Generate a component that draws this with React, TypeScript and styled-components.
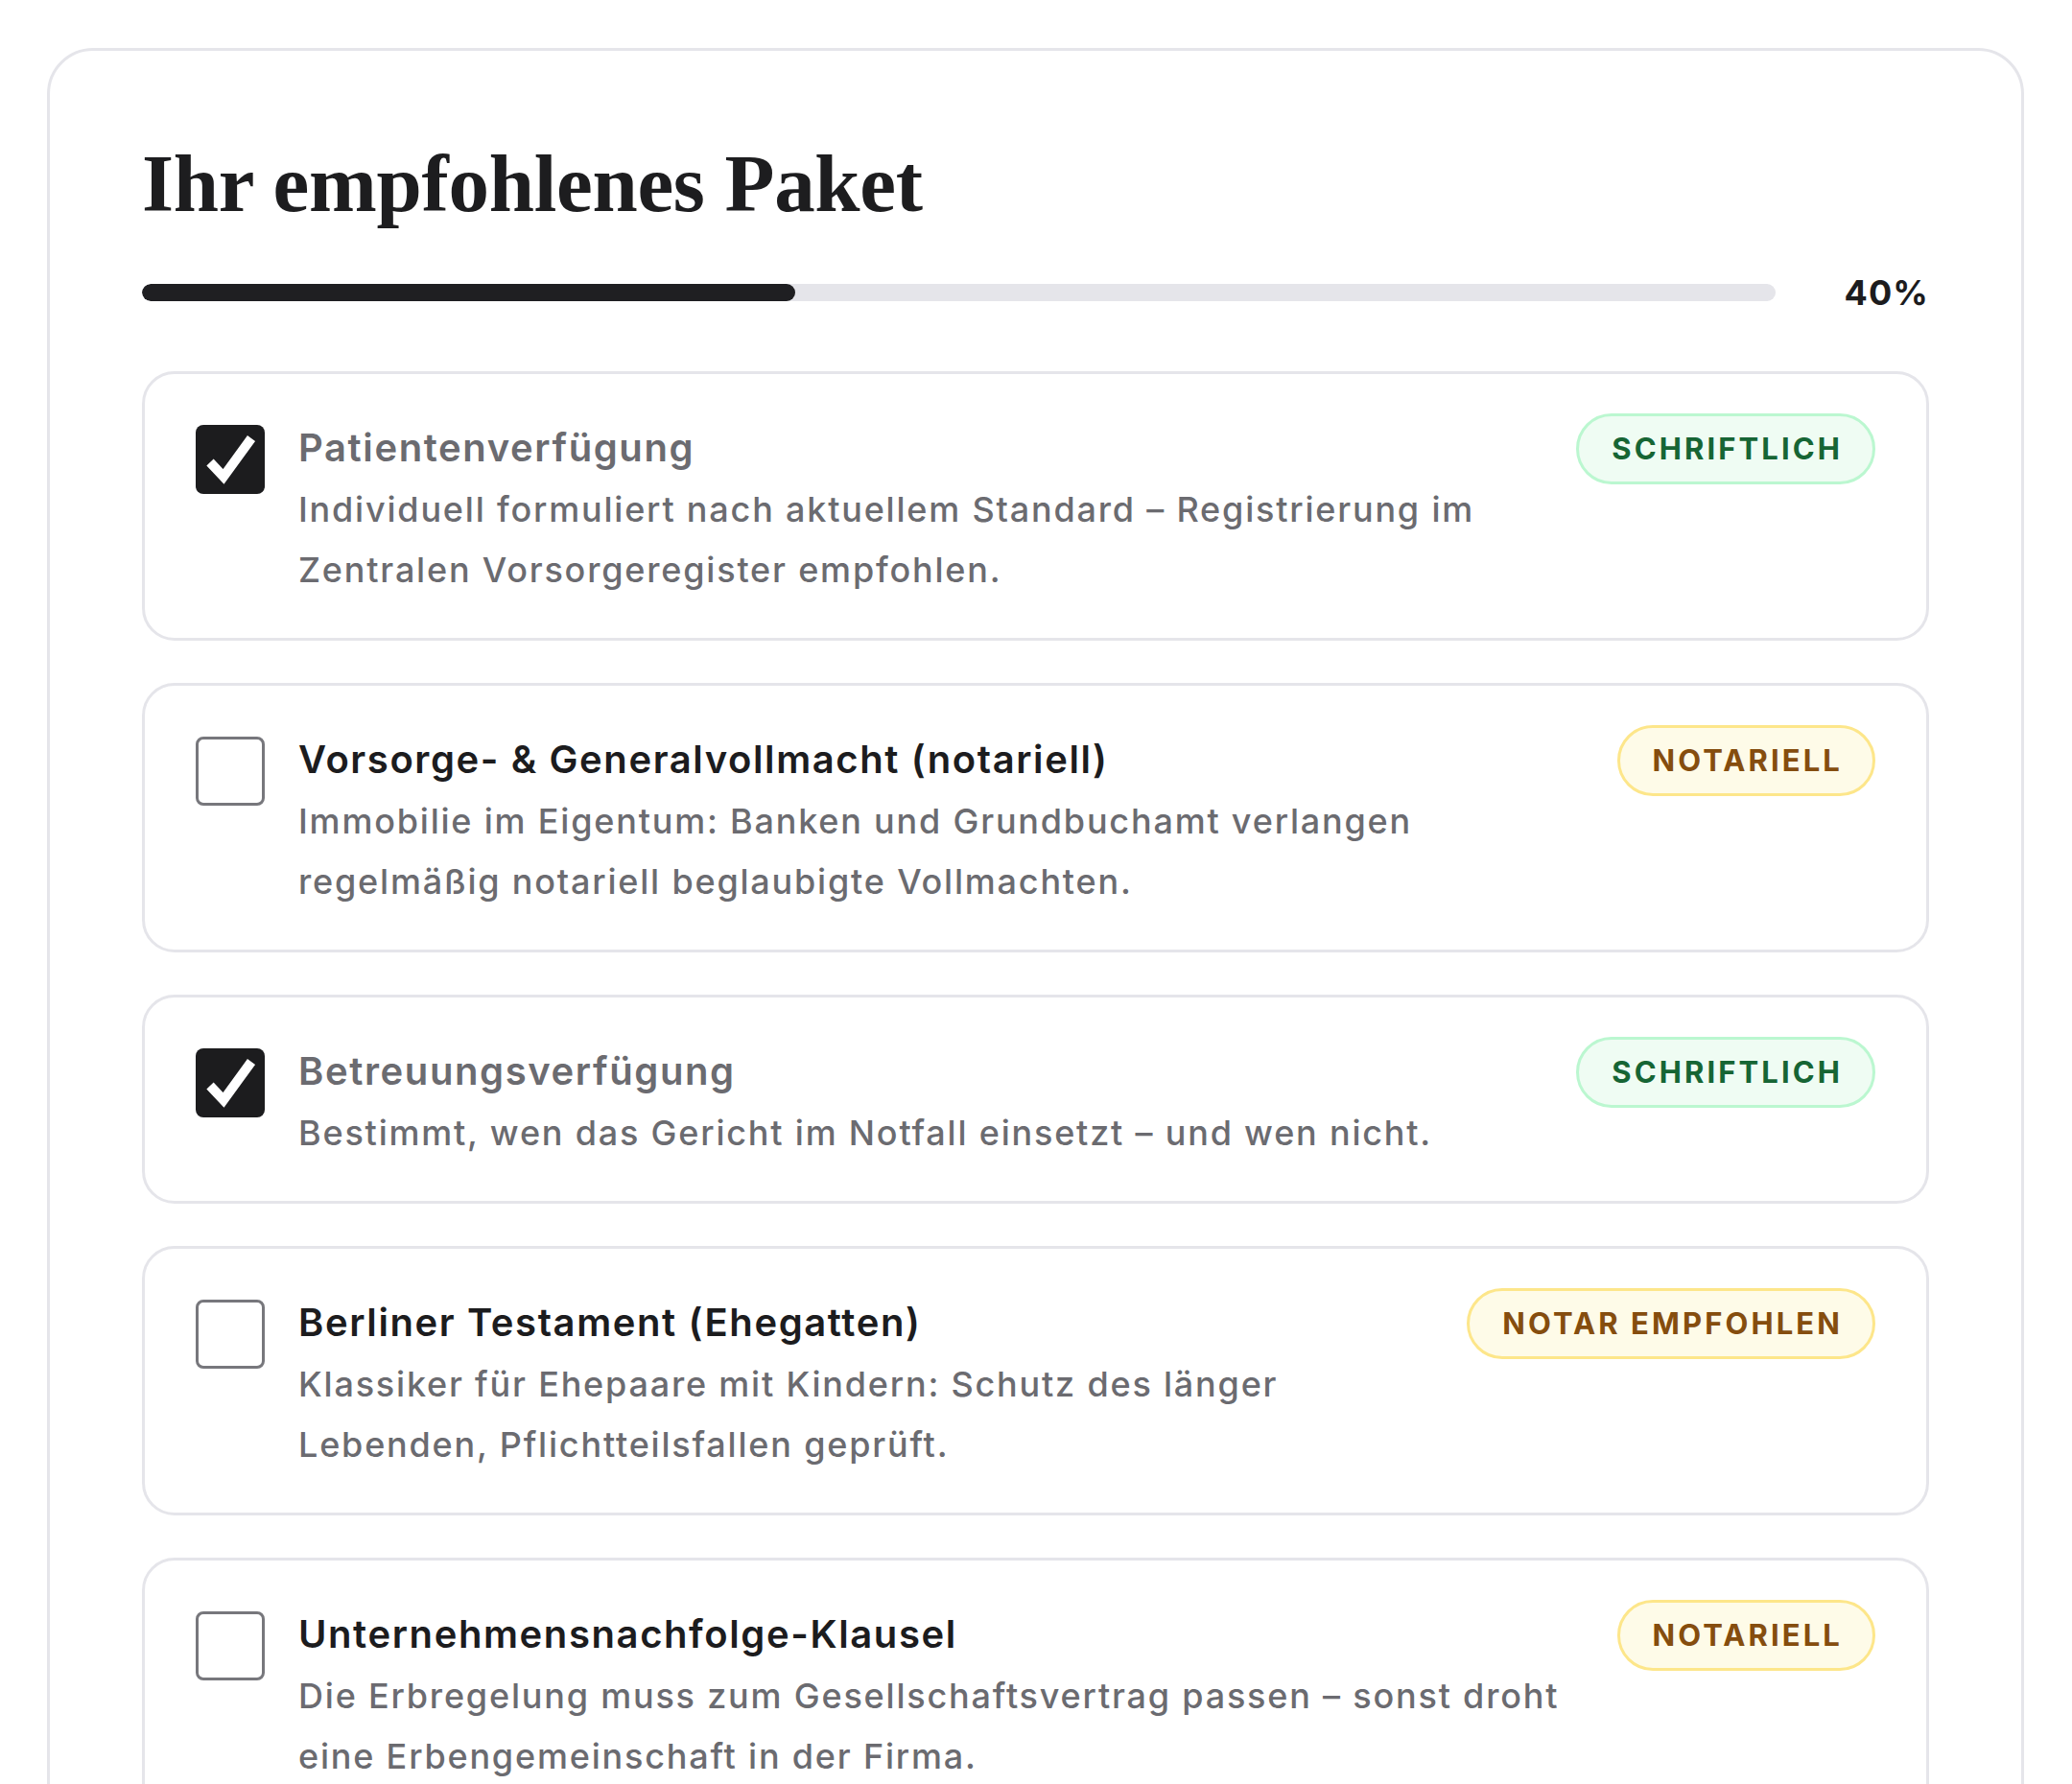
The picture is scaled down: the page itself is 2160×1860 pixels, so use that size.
import React from 'react'
import styled, { createGlobalStyle } from 'styled-components'

const GlobalStyle = createGlobalStyle`
  html, body {
    margin: 0;
    padding: 0;
    background: #ffffff;
  }

  body {
    font-family: Inter, "Noto Sans", sans-serif;
    color: #1c1c1e;
    -webkit-font-smoothing: antialiased;
  }
`

type Tone = 'green' | 'amber'

interface PackageItem {
  title: string
  text: string
  badge: string
  tone: Tone
  checked: boolean
}

const items: PackageItem[] = [
  {
    title: 'Patientenverfügung',
    text: 'Individuell formuliert nach aktuellem Standard – Registrierung im Zentralen Vorsorgeregister empfohlen.',
    badge: 'Schriftlich',
    tone: 'green',
    checked: true,
  },
  {
    title: 'Vorsorge- & Generalvollmacht (notariell)',
    text: 'Immobilie im Eigentum: Banken und Grundbuchamt verlangen regelmäßig notariell beglaubigte Vollmachten.',
    badge: 'Notariell',
    tone: 'amber',
    checked: false,
  },
  {
    title: 'Betreuungsverfügung',
    text: 'Bestimmt, wen das Gericht im Notfall einsetzt – und wen nicht.',
    badge: 'Schriftlich',
    tone: 'green',
    checked: true,
  },
  {
    title: 'Berliner Testament (Ehegatten)',
    text: 'Klassiker für Ehepaare mit Kindern: Schutz des länger Lebenden, Pflichtteilsfallen geprüft.',
    badge: 'Notar empfohlen',
    tone: 'amber',
    checked: false,
  },
  {
    title: 'Unternehmensnachfolge-Klausel',
    text: 'Die Erbregelung muss zum Gesellschaftsvertrag passen – sonst droht eine Erbengemeinschaft in der Firma.',
    badge: 'Notariell',
    tone: 'amber',
    checked: false,
  },
]

const badgeColors = {
  green: { bg: '#effcf3', border: '#bbf7d0', text: '#166534' },
  amber: { bg: '#fefbe8', border: '#fde68a', text: '#854d0e' },
}

const Page = styled.div`
  padding: 50px 50px 50px 49px;
`

const Panel = styled.section`
  border: 3px solid #e5e5ea;
  border-radius: 48px;
  padding: 92px 96px 96px;
  background: #ffffff;
`

const Heading = styled.h1`
  margin: 0 0 44px;
  font-family: "Liberation Serif", "Times New Roman", serif;
  font-size: 85px;
  font-weight: 700;
  line-height: 1.1;
  letter-spacing: -0.3px;
  color: #1d1d1f;
`

const ProgressRow = styled.div`
  display: flex;
  align-items: center;
  gap: 40px;
  height: 44px;
  margin-bottom: 60px;
`

const Track = styled.div`
  flex: 1;
  height: 18px;
  border-radius: 9px;
  background: #e5e5ea;
  overflow: hidden;
`

const Fill = styled.div`
  height: 100%;
  border-radius: 9px;
  background: #1f1f22;
`

const Percent = styled.span`
  min-width: 120px;
  text-align: right;
  font-size: 36px;
  font-weight: 700;
  letter-spacing: 0.03em;
  color: #1c1c1e;
`

const List = styled.div`
  display: flex;
  flex-direction: column;
  gap: 44px;
`

const ItemCard = styled.div`
  display: flex;
  align-items: flex-start;
  padding: 44px 53px 39px;
  border: 3px solid #e5e5ea;
  border-radius: 34px;
  background: #ffffff;
`

const Box = styled.span<{ $checked: boolean }>`
  flex-shrink: 0;
  box-sizing: border-box;
  width: 72px;
  height: 72px;
  margin-top: 9px;
  margin-right: 35px;
  border-radius: 8px;
  display: flex;
  align-items: center;
  justify-content: center;
  border: ${({ $checked }) => ($checked ? 'none' : '3px solid #77777c')};
  background: ${({ $checked }) => ($checked ? '#1c1c1e' : '#ffffff')};
`

const Body = styled.div`
  flex: 1;
  min-width: 0;
  margin-right: 44px;
`

const ItemTitle = styled.div<{ $checked: boolean }>`
  font-size: 40px;
  font-weight: 600;
  line-height: 66px;
  letter-spacing: 0.04em;
  color: ${({ $checked }) => ($checked ? '#6b6b70' : '#1c1c1e')};
`

const ItemText = styled.div`
  font-size: 36px;
  font-weight: 500;
  line-height: 63px;
  letter-spacing: 0.05em;
  color: #6b6b70;
`

const Badge = styled.span<{ $tone: Tone }>`
  flex-shrink: 0;
  margin-top: -3px;
  box-sizing: border-box;
  height: 74px;
  padding: 0 31px 0 34px;
  border-radius: 37px;
  border: 3px solid ${({ $tone }) => badgeColors[$tone].border};
  background: ${({ $tone }) => badgeColors[$tone].bg};
  color: ${({ $tone }) => badgeColors[$tone].text};
  font-size: 31px;
  font-weight: 700;
  line-height: 68px;
  letter-spacing: 0.1em;
  text-transform: uppercase;
  white-space: nowrap;
`

const CheckMark = () => (
  <svg width="72" height="72" viewBox="0 0 72 72">
    <polyline
      points="15,39 29,54 58,14"
      fill="none"
      stroke="#ffffff"
      strokeWidth="10"
      strokeLinejoin="miter"
    />
  </svg>
)

const PackageRow = ({ item }: { item: PackageItem }) => (
  <ItemCard>
    <Box $checked={item.checked}>
      {item.checked && <CheckMark />}
    </Box>
    <Body>
      <ItemTitle $checked={item.checked}>{item.title}</ItemTitle>
      <ItemText>{item.text}</ItemText>
    </Body>
    <Badge $tone={item.tone}>{item.badge}</Badge>
  </ItemCard>
)

const App = () => {
  const progress = 40

  return (
    <Page>
      <GlobalStyle />
      <Panel>
        <Heading>Ihr empfohlenes Paket</Heading>
        <ProgressRow>
          <Track>
            <Fill style={{ width: `${progress}%` }} />
          </Track>
          <Percent>{progress}%</Percent>
        </ProgressRow>
        <List>
          {items.map((item) => (
            <PackageRow key={item.title} item={item} />
          ))}
        </List>
      </Panel>
    </Page>
  )
}

export default App
